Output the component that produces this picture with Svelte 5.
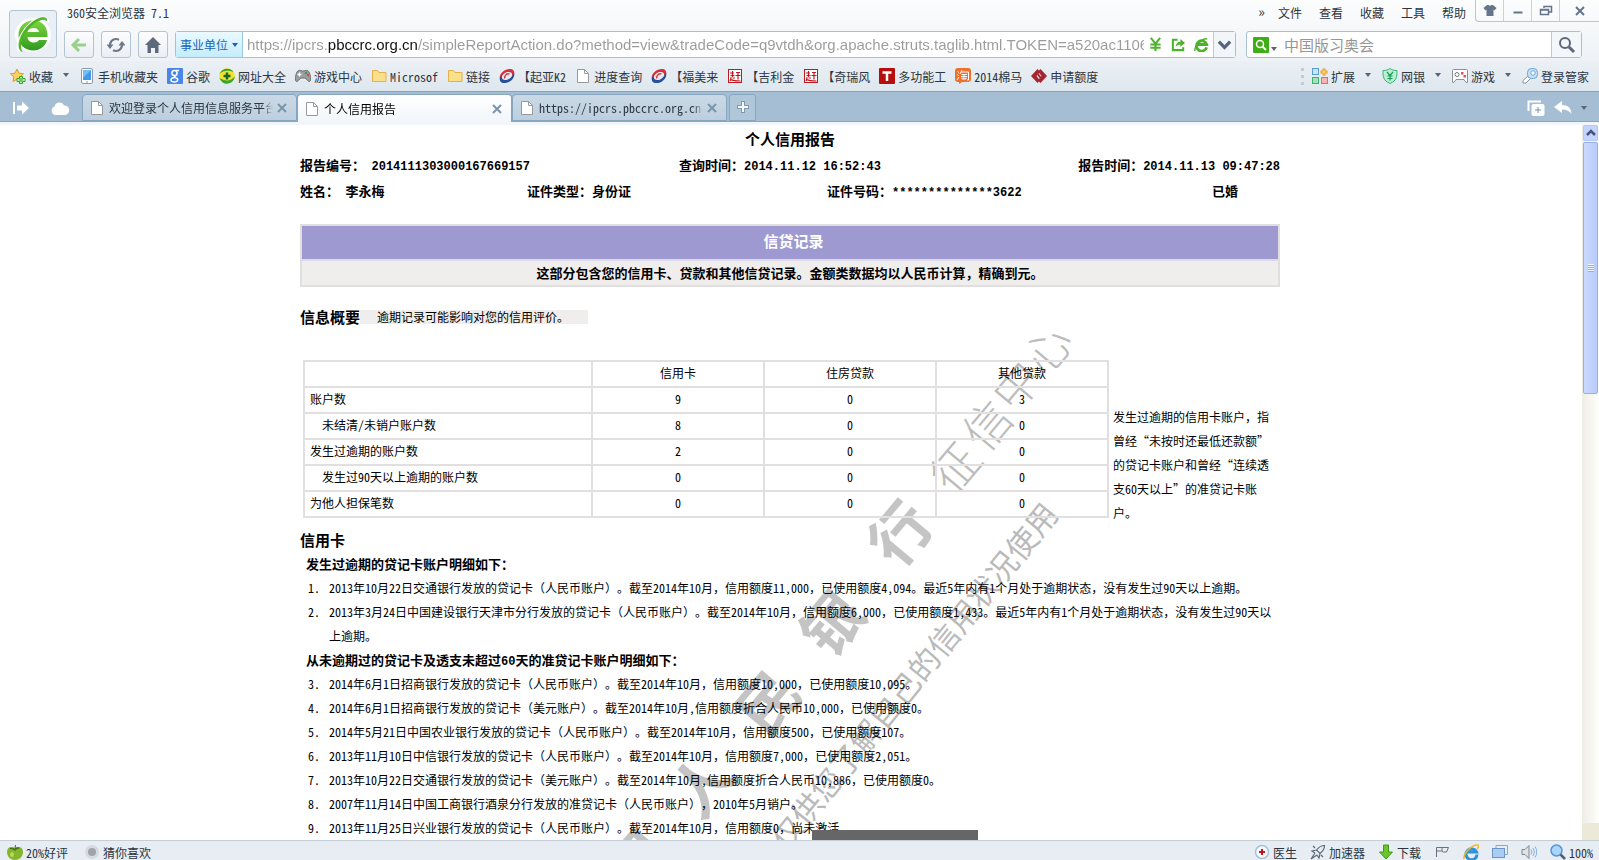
<script>
	let url =
		'https://ipcrs.pbccrc.org.cn/simpleReportAction.do?method=view&tradeCode=q9vtdh&org.apache.struts.taglib.html.TOKEN=a520ac1106ea';
	let keyword = '';

	const menus = ['文件', '查看', '收藏', '工具', '帮助'];

	const bookmarks = [
		{ icon: 'star', text: '收藏', arrow: true },
		{ icon: 'phone', text: '手机收藏夹' },
		{ icon: 'google', text: '谷歌' },
		{ icon: 'plus', text: '网址大全' },
		{ icon: 'pad', text: '游戏中心' },
		{ icon: 'folder', text: 'Microsof' },
		{ icon: 'folder', text: '链接' },
		{ icon: 'swirl', text: '【起亚K2' },
		{ icon: 'doc', text: '进度查询' },
		{ icon: 'swirl', text: '【福美来' },
		{ icon: 'gan', text: '【吉利金' },
		{ icon: 'gan', text: '【奇瑞风' },
		{ icon: 'tee', text: '多功能工' },
		{ icon: 'tao', text: '2014棉马' },
		{ icon: 'knot', text: '申请额度' }
	];

	const plugins = [
		{ icon: 'blocks', text: '扩展', arrow: true },
		{ icon: 'shield', text: '网银', arrow: true },
		{ icon: 'console', text: '游戏', arrow: true },
		{ icon: 'key', text: '登录管家' }
	];

	const tabs = [
		{ text: '欢迎登录个人信用信息服务平台', active: false },
		{ text: '个人信用报告', active: true },
		{ text: 'https://ipcrs.pbccrc.org.cn', active: false }
	];

	const summary = [
		{ name: '账户数', values: [9, 0, 3] },
		{ name: '未结清/未销户账户数', sub: true, values: [8, 0, 0] },
		{ name: '发生过逾期的账户数', values: [2, 0, 0] },
		{ name: '发生过90天以上逾期的账户数', sub: true, values: [0, 0, 0] },
		{ name: '为他人担保笔数', values: [0, 0, 0] }
	];

	const intro = '这部分包含您的信用卡、贷款和其他信贷记录。金额类数据均以人民币计算，精确到元。';

	const overdue = [
		'2013年10月22日交通银行发放的贷记卡（人民币账户）。截至2014年10月，信用额度11,000，已使用额度4,094。最近5年内有1个月处于逾期状态，没有发生过90天以上逾期。',
		'2013年3月24日中国建设银行天津市分行发放的贷记卡（人民币账户）。截至2014年10月，信用额度6,000，已使用额度1,433。最近5年内有1个月处于逾期状态，没有发生过90天以上逾期。'
	];

	const normal = [
		'2014年6月1日招商银行发放的贷记卡（人民币账户）。截至2014年10月，信用额度10,000，已使用额度10,095。',
		'2014年6月1日招商银行发放的贷记卡（美元账户）。截至2014年10月,信用额度折合人民币10,000，已使用额度0。',
		'2014年5月21日中国农业银行发放的贷记卡（人民币账户）。截至2014年10月，信用额度500，已使用额度107。',
		'2013年11月10日中信银行发放的贷记卡（人民币账户）。截至2014年10月，信用额度7,000，已使用额度2,051。',
		'2013年10月22日交通银行发放的贷记卡（美元账户）。截至2014年10月,信用额度折合人民币10,886，已使用额度0。',
		'2007年11月14日中国工商银行酒泉分行发放的准贷记卡（人民币账户），2010年5月销户。',
		'2013年11月25日兴业银行发放的贷记卡（人民币账户）。截至2014年10月，信用额度0，尚未激活。'
	];

	// odd entries are the full-width marks
	const parts = (text) => text.split(/([，（）]+)/);
</script>

{#snippet mixed(text)}
	{#each parts(text) as part, i}{#if i % 2}<span class="full">{part}</span>{:else}{part}{/if}{/each}
{/snippet}

{#snippet icon(name)}
	<svg class="icon" viewBox="0 0 16 16" aria-hidden="true">
		{#if name === 'star'}
			<path d="M7 1l2 4.200 4.500.6-3.300 3.100.8 4.600L7 11.300 3 13.500l.8-4.600L.5 5.800 5 5.200z" fill="#fbd35c" stroke="#dd9a2c" />
			<path d="M9.500 8.500h3v2h2.500v3h-2.500v2h-3v-2H7v-3h2.500z" fill="#fff" stroke="#2fa01d" />
			<path d="M11 9.500v5M8.500 12h5" stroke="#57c33c" stroke-width="1.500" />
		{:else if name === 'phone'}
			<rect x="2.500" y=".5" width="11" height="15" rx="1.500" fill="#fff" stroke="#8d99a8" />
			<rect x="4" y="2" width="8" height="10" fill="#3f9be8" />
			<path d="M4 2h8L4 10z" fill="#74bdf5" />
			<path d="M7 14h2" stroke="#8d99a8" />
		{:else if name === 'google'}
			<rect width="16" height="16" rx="1" fill="#4a86e8" />
			<circle cx="7.500" cy="5" r="2.600" fill="none" stroke="#fff" stroke-width="1.500" />
			<path d="M9 2.500h3M9 7.500c-2 1-2 2 0 2.500M7.500 9.500c-5 .5-4.500 4.500 0 4.500 4 0 4-3.500 1.500-4" fill="none" stroke="#fff" stroke-width="1.400" />
		{:else if name === 'plus'}
			<circle cx="8" cy="8" r="7.800" fill="#f7e233" />
			<path d="M.5 10A7.800 7.800 0 0 0 15.800 8c-3 5-9 6-15.300 2zM.5 6C3 0 11-1 14.500 4 9 2 5 2 .5 6z" fill="#3aa52c" />
			<path d="M8 4.500v7M4.500 8h7" stroke="#116b1a" stroke-width="2.500" />
		{:else if name === 'pad'}
			<path d="M2 4c2-3 4-1 6-1s4-2 6 1c1.500 3 2.500 9 .5 9.500C13 14 12 11 10 10H6c-2 1-3 4-4.500 3.500C-.5 13 .5 7 2 4z" fill="#9a9d9f" stroke="#6c7072" />
			<path d="M4.500 4.500v4M2.500 6.500h4" stroke="#fff" stroke-width="1.300" />
			<circle cx="11" cy="5" r="1.200" fill="#3a9a42" /><circle cx="13" cy="7" r="1.200" fill="#d04545" />
		{:else if name === 'folder'}
			<path d="M1.500 2.500h5l1.500 2h7v9h-13.500z" fill="#fbe08a" stroke="#e3b04a" />
		{:else if name === 'swirl'}
			<path d="M1 12C-1 6 6 0 12 1c4 1 4 5 1 8 1-4-1-5.500-4.500-5C5 4.500 2.500 8 1 12z" fill="#d8303a" />
			<path d="M15 4c2 6-5 12-11 11-4-1-4-5-1-8-1 4 1 5.500 4.500 5C11 11.500 13.500 8 15 4z" fill="#274f9b" />
			<path d="M6 10.500C4.500 8 8 5 10.500 6" fill="none" stroke="#d8303a" stroke-width="1.300" />
		{:else if name === 'doc'}
			<path d="M2.500 1.500h7l4 4v9h-11z" fill="#fff" stroke="#999" />
			<path d="M9.500 1.500v4h4" fill="none" stroke="#999" />
		{:else if name === 'gan'}
			<rect x="1.500" y="1.500" width="13" height="13" fill="#fff" stroke="#c01820" />
			<path d="M3 5h4M3.500 7.500h4M5.500 3v6M5.500 10H8M4 9c0 2 0 3-1 4M4 11.500c2 1.500 6 1.500 9.500 1.500M9 4.500h4M8.500 7.500h5M11 4.500v7" fill="none" stroke="#c01820" stroke-width="1.200" />
		{:else if name === 'tee'}
			<rect width="16" height="16" rx="1" fill="#b80d0d" />
			<path d="M3.500 4.500h9M8 4v9" stroke="#fff" stroke-width="2.500" />
		{:else if name === 'tao'}
			<path d="M3 0h10q3 0 3 3v8q0 3-3 3H7l-3 2v-2H3q-3 0-3-3V3q0-3 3-3z" fill="#f0702a" />
			<path d="M2.500 3.500l1.500 1M2 6.500l1.500 1M2 12l2-3M7 2L5 6M6 4h7.500v8H12M6.500 6.500H12M6 8.500h6M9 6v5M7 9.500V11h4V9.500" fill="none" stroke="#fff" />
		{:else if name === 'knot'}
			<path d="M6.500 1l2.500 2.500L5.500 8 9 12.500 6.500 15 0 8zM9.500 15L7 12.500 10.500 8 7 3.500 9.500 1 16 8z" fill="#a52630" />
			<path d="M6 5l4.500 6" stroke="#a52630" stroke-width="2" />
		{:else if name === 'blocks'}
			<rect x=".5" y=".5" width="6" height="6" fill="#c6e4fa" stroke="#5a9fd4" />
			<rect x=".5" y="9.500" width="6" height="6" fill="#a3e3ba" stroke="#3cb371" />
			<rect x="9.500" y="9.500" width="6" height="6" fill="#fbb4b4" stroke="#e26a6a" />
			<path d="M12 .5v7M8.500 4h7" stroke="#e89b20" stroke-width="3" />
			<path d="M12 1.500v5M9.500 4h5" stroke="#ffe08a" />
		{:else if name === 'shield'}
			<path d="M8 .5c2 1.500 4 2 7 2 0 6 0 10-7 13-7-3-7-7-7-13 3 0 5-.5 7-2z" fill="#b9f0d0" stroke="#36b37a" />
			<path d="M5 4l3 3.500L11 4M8 7v5.500M5.500 8h5M5.500 10.500h5" fill="none" stroke="#1d9c5b" stroke-width="1.200" />
		{:else if name === 'console'}
			<path d="M1.500 1.500h13q1 0 1 1v12q-1.500 1-3.500-3H4q-2 4-3.500 3v-12q0-1 1-1z" fill="#fff" stroke="#8f9199" />
			<circle cx="5" cy="6.500" r="2" fill="none" stroke="#777" />
			<rect x="9" y="4" width="2.500" height="2.500" fill="#e2564d" /><rect x="11.500" y="7" width="2.500" height="2.500" fill="#e2564d" />
		{:else if name === 'key'}
			<path d="M7 7l2.500 2.500L4 15H1v-2.500z" fill="#fff" stroke="#8a93a0" />
			<rect x="5.500" y=".5" width="10" height="10" rx="4" fill="#c3e0f7" stroke="#6fa6d6" />
			<circle cx="11" cy="5" r="2.200" fill="#fff" stroke="#6fa6d6" />
		{:else if name === 'apple'}
			<path d="M8 4c4-2 8-1 8 4s-4 8-8 8-8-3-8-8 4-6 8-4z" fill="#84b52a" />
			<path d="M8 5.500C6 4 4.500 4 3 4.500c2 0 4 .5 5 2 1-1.500 2-2 4-2.500-1.500-.5-3 0-4 .5L8.500 1" fill="#47701b" stroke="#47701b" />
			<ellipse cx="5" cy="10.500" rx="2" ry="2.500" fill="#b4d95b" />
		{:else if name === 'dot'}
			<circle cx="8" cy="8" r="7" fill="#d6dade" /><circle cx="8" cy="8" r="4" fill="#a0a4a8" />
		{:else if name === 'doctor'}
			<circle cx="8" cy="8" r="6.500" fill="#f4f8fb" stroke="#a8c3d8" stroke-width="1.500" />
			<path d="M8 5v6M5 8h6" stroke="#c5161d" stroke-width="2" />
		{:else if name === 'rocket'}
			<path d="M14.500 1.500c-4 0-6 2-8 4.500l3.500 3.500c2.500-2 4.500-4 4.500-8zM6.500 6L2 7l3 2M10 9.500L9 14l-2-3M5 9l-4 6 6-4M3 2l2 2M13 13l-2-2" fill="none" stroke="#5d6b7a" stroke-width="1.200" />
		{:else if name === 'down'}
			<path d="M5.500 1h5v7h4L8 15 1.500 8h4z" fill="#6cc52b" stroke="#3f9a17" />
		{:else if name === 'flag'}
			<path d="M2.500 13V3.500h12L12.500 8H9L7.500 7h-5M8 3.500V7" fill="none" stroke="#66717d" />
		{:else if name === 'ie'}
			<path d="M14 10.500A5.500 5.500 0 1 1 13.500 8H4" fill="none" stroke="#2b93dc" stroke-width="3" />
			<path d="M1 15C0 10 9 0 15 1c1 1 0 3-1 4" fill="none" stroke="#f1b92b" stroke-width="1.500" />
		{:else if name === 'window'}
			<path d="M4 5V1.500h11.500v9H13" fill="#e3eefa" stroke="#8fa6c4" />
			<rect x=".5" y="4.500" width="12" height="9" fill="#a9cdf2" stroke="#6c94c4" />
		{:else if name === 'speaker'}
			<path d="M1 5.500h3l4-4v13l-4-4H1z" fill="#dfe4e8" stroke="#7d8790" />
			<path d="M10 5.500q2 2.500 0 5M12 4q3 4 0 8M14 2.500q3.500 5.500 0 11" fill="none" stroke="#7fb2e0" />
		{:else if name === 'zoom'}
			<circle cx="6.500" cy="6.500" r="5.500" fill="#a9d5f8" stroke="#5a96cf" stroke-width="1.500" />
			<path d="M10.500 10.500l4.500 4.500" stroke="#54606c" stroke-width="2.500" />
		{/if}
	</svg>
{/snippet}

<div class="browser">
	<header>
		<button class="logo" aria-label="360安全浏览器">
			<svg viewBox="0 0 40 40">
				<defs>
					<linearGradient id="leaf" x1="0" y1="0" x2="0" y2="1">
						<stop offset="0" stop-color="#7ed63f" />
						<stop offset="1" stop-color="#2f9a1f" />
					</linearGradient>
				</defs>
				<ellipse cx="20" cy="21" rx="18" ry="17" fill="#fff" />
				<path d="M34.500 23H14.500c.5 4 3 5.500 6.500 5.500 2.500 0 4-1 5-2.500h8C32.500 32 27 36.500 20.500 36.500 11 36.500 5.500 30 5.500 21.500S11 6.500 20.500 6.500 35 13.500 34.500 23zM26 18c-.5-3-2.500-4-5.500-4S15.500 15 14.500 18z" fill="url(#leaf)" />
				<path d="M6 37C1 31 12 9 27 4.500c5-1.500 8 0 7.500 4" fill="none" stroke="#fff" stroke-width="2.500" />
				<path d="M10 38C0 36 8 12 25 4.500c6-2.500 10-1 9 3-1-2-4-2.500-8-.5C13 12 4 32 10 38z" fill="#4fb527" />
			</svg>
		</button>
		<div class="bars">
			<div class="titlebar">
				<span class="name">360安全浏览器 7.1</span>
				<nav class="menus">
					<span class="more">»</span>
					{#each menus as menu}
						<button>{menu}</button>
					{/each}
				</nav>
				<div class="controls">
					<button aria-label="皮肤">
						<svg viewBox="0 0 14 14"><path d="M4 1h1.500q1.500 1.500 3 0H10l3.500 3-2 2.500-1-1V12h-7V5.500l-1 1L.5 4z" fill="#64748a" /></svg>
					</button>
					<button aria-label="最小化">
						<svg viewBox="0 0 14 14"><path d="M2.500 8.500h9" stroke="#64748a" stroke-width="2" /></svg>
					</button>
					<button aria-label="还原">
						<svg viewBox="0 0 14 14"><path d="M5 4V2.500h7.500V8H10M1.500 5.500H9.500v5h-8zM1.500 6h8" fill="none" stroke="#64748a" stroke-width="1.500" /></svg>
					</button>
					<button class="quit" aria-label="关闭">
						<svg viewBox="0 0 14 14"><path d="M3 3l8 8M11 3l-8 8" stroke="#64748a" stroke-width="2" /></svg>
					</button>
				</div>
			</div>

			<div class="toolbar">
				<button class="tool" aria-label="后退">
					<svg viewBox="0 0 18 18"><path d="M16 9H4M9 3L3 9l6 6" fill="none" stroke="#98d08c" stroke-width="3" /></svg>
				</button>
				<button class="tool" aria-label="刷新">
					<svg viewBox="0 0 18 18">
						<path d="M3 10c-.5-4 2.500-7 6-7 1.500 0 2 .3 3 .8M15 8c.5 4-2.500 7-6 7-1.500 0-2-.3-3-.8" fill="none" stroke="#6a7888" stroke-width="2.200" />
						<path d="M-.5 8.500h7L3 13zM18.500 9.500h-7L15 5z" fill="#6a7888" />
					</svg>
				</button>
				<button class="tool" aria-label="主页">
					<svg viewBox="0 0 18 18"><path d="M9 1l8 8h-2.500v8H11v-5H7v5H3.500V9H1z" fill="#5c6a7c" /></svg>
				</button>
				<div class="address">
					<button class="site">事业单位<i class="caret"></i></button>
					<input type="text" aria-label="地址" bind:value={url} />
					<button class="mini" aria-label="购物">
						<svg viewBox="0 0 16 16"><path d="M3 1l5 6 5-6M8 7v8M2.500 8h11M2.500 11.500h11" fill="none" stroke="#4db22c" stroke-width="2.200" /></svg>
					</button>
					<button class="mini" aria-label="分享">
						<svg viewBox="0 0 16 16"><path d="M7 3H2v11h11v-3" fill="none" stroke="#4db22c" stroke-width="2.200" /><path d="M5 11c0-4 2-6 5-6V2l5 4.500-5 4V8c-2 0-4 1-5 3z" fill="#4db22c" /></svg>
					</button>
					<button class="mini" aria-label="兼容模式">
						<svg viewBox="0 0 16 16"><path d="M13.500 11A5.500 5.500 0 1 1 13.500 8H4" fill="none" stroke="#4db22c" stroke-width="3" /><path d="M1 15C0 10 9 1 14 2" fill="none" stroke="#4db22c" stroke-width="1.500" /></svg>
					</button>
					<button class="drop" aria-label="历史">
						<svg viewBox="0 0 16 16"><path d="M2 5l6 6 6-6" fill="none" stroke="#56657a" stroke-width="3.500" /></svg>
					</button>
				</div>
				<div class="search">
					<button class="engine" aria-label="搜索引擎">
						<svg viewBox="0 0 16 16"><rect width="16" height="16" rx="1" fill="#3fae16" /><circle cx="7" cy="7" r="3.500" fill="none" stroke="#fff" stroke-width="1.500" /><path d="M9.500 9.500L13 13" stroke="#fff" stroke-width="2" /></svg>
						<i class="caret"></i>
					</button>
					<input type="text" aria-label="搜索" placeholder="中国版习奥会" bind:value={keyword} />
					<button class="go" aria-label="开始搜索">
						<svg viewBox="0 0 18 18"><circle cx="7" cy="7" r="5" fill="none" stroke="#5c6878" stroke-width="2" /><path d="M11 11l5 5" stroke="#5c6878" stroke-width="3" /></svg>
					</button>
				</div>
			</div>
		</div>
	</header>

	<nav class="bookmarks">
		{#each bookmarks as item}
			<a href="#bookmark">{@render icon(item.icon)}{item.text}{#if item.arrow}<i class="caret"></i>{/if}</a>
		{/each}
		<div class="plugins">
			<span class="grip"></span>
			{#each plugins as item}
				<button>{@render icon(item.icon)}{item.text}{#if item.arrow}<i class="caret"></i>{/if}</button>
			{/each}
		</div>
	</nav>

	<div class="tabbar">
		<div class="side">
			<button aria-label="侧边栏">
				<svg viewBox="0 0 18 16" width="18" height="16"><path d="M1 2v12h2V2zM5 5.500h5V1.500L17 8l-7 6.500v-4H5z" fill="#fff" /></svg>
			</button>
			<button aria-label="云同步">
				<svg viewBox="0 0 20 16" width="20" height="16"><path d="M5 15a4.500 4.500 0 0 1-.5-8.500A5 5 0 0 1 14 5.500 4.700 4.700 0 0 1 15 15z" fill="#fff" /></svg>
			</button>
		</div>
		{#each tabs as tab}
			<div class="tab" class:active={tab.active}>
				{@render icon('doc')}
				<a href="#tab">{tab.text}</a>
				<button aria-label="关闭标签">
					<svg viewBox="0 0 10 10" width="10" height="10"><path d="M1 1l8 8M9 1L1 9" stroke="#7b94aa" stroke-width="2" /></svg>
				</button>
			</div>
		{/each}
		<button class="add" aria-label="新建标签">
			<svg viewBox="0 0 12 12" width="12" height="12"><path d="M6 0v12M0 6h12" stroke="#8298ac" stroke-width="4" /><path d="M6 1v10M1 6h10" stroke="#f3f8fc" stroke-width="2" /></svg>
		</button>
		<div class="tabtools">
			<button aria-label="恢复标签">
				<svg viewBox="0 0 18 16" width="18" height="16"><path d="M1.500 11V1.500H14" fill="none" stroke="#fff" stroke-width="2" /><rect x="4.500" y="4" width="13" height="12" rx="2" fill="#fff" /><path d="M11 7v6M8 10h6" stroke="#7892aa" /></svg>
			</button>
			<button aria-label="撤销">
				<svg viewBox="0 0 18 16" width="18" height="16"><path d="M0 7l8-6v4c6 0 9 3 9.500 9-2-3-5-4.500-9.500-4.500V13z" fill="#fff" /></svg>
			</button>
			<i class="caret"></i>
		</div>
	</div>

	<div class="view">
		<main>
			<article>
				<svg class="watermark" viewBox="0 0 980 715" aria-hidden="true">
					<g class="song" text-anchor="middle">
						<text transform="translate(655 342) rotate(-50)" dy="18">征</text>
						<text transform="translate(687 300) rotate(-50)" dy="18">信</text>
						<text transform="translate(716 260) rotate(-50)" dy="18">中</text>
						<text transform="translate(747 224) rotate(-50)" dy="18">心</text>
					</g>
					<g class="brush" text-anchor="middle">
						<text transform="translate(600 408) rotate(-50)" dy="23">行</text>
						<text transform="translate(532 498) rotate(-50)" dy="23">银</text>
						<text transform="translate(468 577) rotate(-50)" dy="23">民</text>
						<text transform="translate(402 659) rotate(-50)" dy="23">人</text>
						<text transform="translate(337 738) rotate(-50)" dy="23">国</text>
					</g>
					<text class="usage" transform="translate(487 727) rotate(-51)">仅供您了解自己的信用状况使用</text>
				</svg>

				<h1>个人信用报告</h1>
				<div class="info first">
					<span>报告编号： <b>2014111303000167669157</b></span>
					<span>查询时间：<b>2014.11.12 16:52:43</b></span>
					<span>报告时间：<b>2014.11.13 09:47:28</b></span>
				</div>
				<div class="info second">
					<span>姓名： 李永梅</span>
					<span>证件类型：身份证</span>
					<span>证件号码：<b>**************3622</b></span>
					<span>已婚</span>
				</div>

				<section class="banner">
					<h2>信贷记录</h2>
					<p>{@render mixed(intro)}</p>
				</section>

				<div class="overview">
					<h2>信息概要</h2>
					<p>逾期记录可能影响对您的信用评价。</p>
				</div>

				<div class="summary">
					<table>
						<thead>
							<tr>
								<td></td>
								<th scope="col">信用卡</th>
								<th scope="col">住房贷款</th>
								<th scope="col">其他贷款</th>
							</tr>
						</thead>
						<tbody>
							{#each summary as row}
								<tr>
									<th scope="row" class:sub={row.sub}>{row.name}</th>
									{#each row.values as value}
										<td>{value}</td>
									{/each}
								</tr>
							{/each}
						</tbody>
					</table>
					<p>发生过逾期的信用卡账户<span class="full">，</span>指曾经“未按时还最低还款额”<wbr />的贷记卡账户和曾经“连续透支60天以上”<wbr />的准贷记卡账户。</p>
				</div>

				<h2>信用卡</h2>
				<h3>发生过逾期的贷记卡账户明细如下：</h3>
				<ol>
					{#each overdue as line}
						<li>{@render mixed(line)}</li>
					{/each}
				</ol>
				<h3>从未逾期过的贷记卡及透支未超过<b>60</b>天的准贷记卡账户明细如下：</h3>
				<ol class="rest">
					{#each normal as line}
						<li>{@render mixed(line)}</li>
					{/each}
				</ol>
				<div class="floater"></div>
			</article>
		</main>
		<div class="scrollbar">
			<button aria-label="向上滚动">
				<svg viewBox="0 0 10 8" width="10" height="8"><path d="M1 6l4-4 4 4" fill="none" stroke="#42557d" stroke-width="2.500" /></svg>
			</button>
			<div class="thumb"><span></span></div>
			<div class="corner"></div>
		</div>
	</div>

	<footer>
		<button>{@render icon('apple')}20%好评</button>
		<button>{@render icon('dot')}猜你喜欢</button>
		<div class="status">
			<button>{@render icon('doctor')}医生</button>
			<button>{@render icon('rocket')}加速器</button>
			<button>{@render icon('down')}下载</button>
			<button aria-label="举报">{@render icon('flag')}</button>
			<button aria-label="浏览器模式">{@render icon('ie')}</button>
			<button aria-label="窗口">{@render icon('window')}</button>
			<button aria-label="静音">{@render icon('speaker')}</button>
			<button>{@render icon('zoom')}100%</button>
		</div>
	</footer>
</div>

<style>
	:global(body) {
		margin: 0;
		background: #fff;
	}

	.browser {
		display: flex;
		flex-direction: column;
		height: 100vh;
		overflow: hidden;
		font-family: 'Noto Sans CJK SC', sans-serif;
		font-size: 12px;
		font-feature-settings: 'hwid' 1;
		text-spacing-trim: space-all;
		color: #2c3540;
	}

	button,
	input {
		margin: 0;
		padding: 0;
		border: 0;
		background: none;
		font: inherit;
		font-feature-settings: inherit;
		color: inherit;
	}

	a {
		color: inherit;
		text-decoration: none;
	}

	h1,
	h2,
	h3,
	p,
	ol {
		margin: 0;
		padding: 0;
		font-size: inherit;
	}

	.full {
		font-feature-settings: normal;
	}

	.icon {
		flex: none;
		width: 16px;
		height: 16px;
	}

	.caret {
		border: 3px solid transparent;
		border-top: 4px solid #5a6470;
		border-bottom: 0;
	}

	header {
		display: flex;
		height: 61px;
		padding-left: 9px;
		background: linear-gradient(#fcfdfd, #eef2f6);
	}

	.logo {
		flex: none;
		width: 48px;
		height: 48px;
		margin: 10px 7px 0 0;
		border: 1px solid #b3c4d4;
		border-radius: 3px;
		background: #e9eff4;
	}

	.logo svg {
		display: block;
		width: 40px;
		height: 40px;
		margin: auto;
	}

	.bars {
		flex: 1;
		min-width: 0;
	}

	.titlebar {
		display: flex;
		height: 31px;
	}

	.name {
		padding-left: 3px;
		line-height: 25px;
	}

	.menus {
		display: flex;
		gap: 17px;
		height: 25px;
		margin-left: auto;
		align-items: center;
	}

	.more {
		font-size: 14px;
		margin-right: -4px;
		padding-bottom: 3px;
	}

	.controls {
		display: flex;
		height: 21px;
		margin-left: 9px;
		border: 1px solid #b7c8d8;
		border-width: 0 0 1px 1px;
		border-radius: 0 0 0 4px;
	}

	.controls button {
		width: 28px;
		padding-top: 4px;
		border-right: 1px solid #c5d3df;
	}

	.controls .quit {
		width: 39px;
		border-right: 0;
	}

	.controls svg {
		width: 14px;
		height: 14px;
	}

	.toolbar {
		display: flex;
		gap: 7px;
		height: 27px;
		padding-right: 17px;
	}

	.tool {
		flex: none;
		width: 30px;
		border: 1px solid #b3c4d4;
		border-radius: 3px;
		background: linear-gradient(#fdfdfe, #eaeff4);
	}

	.tool svg {
		display: block;
		width: 18px;
		height: 18px;
		margin: auto;
	}

	.address,
	.search {
		display: flex;
		align-items: stretch;
		box-sizing: border-box;
		border: 1px solid #a9c0d3;
		border-radius: 3px;
		background: #fff;
	}

	.address {
		flex: 1;
		min-width: 0;
	}

	.site {
		display: flex;
		flex: none;
		align-items: center;
		justify-content: center;
		gap: 4px;
		width: 67px;
		border-right: 1px solid #9cc7e4;
		background: linear-gradient(#eafaff, #c4ecfb);
		color: #1b64b5;
	}

	.site .caret {
		border-top-color: #1b64b5;
	}

	.address input {
		flex: 1;
		min-width: 0;
		padding-left: 4px;
		font-family: 'Liberation Sans', sans-serif;
		font-size: 15px;
		color: transparent;
		background: linear-gradient(90deg, #9b9b9b 85px, #111 85px, #111 175px, #9b9b9b 175px);
		background-clip: text;
		-webkit-background-clip: text;
	}

	.mini {
		display: grid;
		flex: none;
		width: 23px;
		place-items: center;
	}

	.mini svg,
	.drop svg {
		display: block;
		width: 15px;
		height: 15px;
		margin: auto;
	}

	.drop {
		flex: none;
		width: 22px;
		border-left: 1px solid #b9cad8;
		background: #f2f6f9;
	}

	.search {
		flex: none;
		width: 336px;
		margin-left: 3px;
	}

	.engine {
		display: flex;
		align-items: center;
		gap: 2px;
		padding-left: 6px;
	}

	.engine svg {
		width: 16px;
		height: 16px;
	}

	.engine .caret {
		align-self: flex-end;
		margin-bottom: 6px;
	}

	.search input {
		flex: 1;
		min-width: 0;
		padding-left: 7px;
		font-size: 15px;
	}

	.search input::placeholder {
		color: #969696;
	}

	.go {
		width: 30px;
		border-left: 1px solid #b9cad8;
		background: #f4f7fa;
	}

	.go svg {
		display: block;
		width: 18px;
		height: 18px;
		margin: auto;
	}

	.bookmarks {
		display: flex;
		gap: 9px;
		height: 30px;
		padding: 0 10px;
		align-items: center;
		background: linear-gradient(#ebf0f4, #dee7ef);
		white-space: nowrap;
	}

	.bookmarks a,
	.bookmarks button {
		display: flex;
		gap: 3px;
		align-items: center;
	}

	.bookmarks .caret {
		margin: 0 1px 2px 7px;
	}

	.plugins {
		display: flex;
		gap: 10px;
		margin-left: auto;
	}

	.grip {
		width: 2px;
		margin-right: -4px;
		border-left: 3px dotted #c3ccd4;
	}

	.tabbar {
		display: flex;
		flex: none;
		box-sizing: border-box;
		height: 34px;
		padding-top: 2px;
		border-top: 1px solid #86a3bb;
		border-bottom: 3px solid #f2f6fa;
		background: #a5bed4;
		box-shadow: inset 0 -1px #84a7c2;
	}

	.side {
		display: flex;
		flex: none;
		gap: 20px;
		box-sizing: border-box;
		width: 82px;
		padding-left: 12px;
		align-items: center;
	}

	.side button,
	.tabtools button {
		display: flex;
	}

	.tab {
		display: flex;
		gap: 4px;
		align-items: center;
		box-sizing: border-box;
		flex: 0 1 215px;
		min-width: 0;
		height: 27px;
		padding: 0 9px 0 6px;
		border: 1px solid #86a6c0;
		border-radius: 4px 4px 0 0;
		background: linear-gradient(#cbd9e6, #bccfdf);
	}

	.tab.active {
		height: 28px;
		border-bottom: 0;
		background: linear-gradient(#fff, #f2f6fa);
		color: #000;
	}

	.tab a {
		flex: 1;
		overflow: hidden;
		white-space: nowrap;
		mask-image: linear-gradient(90deg, #000 94%, transparent);
	}

	.tab button {
		display: flex;
	}

	.add {
		width: 27px;
		height: 27px;
		margin-left: 2px;
		border: 1px solid #86a6c0;
		border-radius: 3px 3px 0 0;
		background: #b0c7da;
	}

	.tabtools {
		display: flex;
		gap: 9px;
		margin-left: auto;
		padding-right: 12px;
		align-items: center;
	}

	.view {
		display: flex;
		flex: 1;
		min-height: 0;
	}

	main {
		flex: 1;
		overflow: hidden;
		border-right: 2px solid #fff;
		background: #fff;
		color: #000;
	}

	article {
		position: relative;
		width: 980px;
		margin: 0 auto;
		padding-top: 1px;
		line-height: 24px;
	}

	.watermark {
		position: absolute;
		z-index: 0;
		top: 0;
		left: 0;
		width: 980px;
		height: 715px;
	}

	.song {
		font-size: 47px;
		font-weight: 300;
		fill: #bcbcbc;
	}

	.brush {
		font-size: 60px;
		font-weight: 700;
		fill: #c4c4c4;
	}

	.usage {
		font-size: 31px;
		font-weight: 400;
		fill: #bababa;
	}

	h1,
	.info,
	.banner,
	.overview,
	.summary,
	h3,
	ol {
		position: relative;
	}

	h1 {
		font-size: 15px;
		line-height: 26px;
		text-align: center;
	}

	.info {
		display: grid;
		font-size: 13px;
		font-weight: bold;
		line-height: 26px;
		white-space: nowrap;
	}

	.info b,
	h3 b {
		font-family: 'Liberation Mono', monospace;
		font-size: 12px;
		line-height: 1;
	}

	.first {
		grid-template-columns: 379px 1fr auto;
	}

	.second {
		grid-template-columns: 227px 300px 385px 1fr;
	}

	.banner {
		margin-top: 20px;
		border: 2px solid #e0dede;
		text-align: center;
	}

	.banner h2 {
		padding: 0 0 4px 7px;
		border-bottom: 2px solid #dcd9e8;
		background: #9e9ad1;
		color: #fff;
		line-height: 29px;
	}

	.banner p {
		background: #f0eded;
		font-size: 13px;
		font-weight: bold;
	}

	h2 {
		font-size: 15px;
	}

	.overview {
		display: flex;
		margin: 18px 0 31px;
		align-items: center;
	}

	.overview p {
		width: 211px;
		padding-left: 17px;
		background: #f0eded;
		line-height: 14px;
	}

	.summary {
		display: flex;
		gap: 4px;
		margin: 0 0 3px 3px;
		align-items: flex-start;
	}

	.summary p {
		flex: 1;
		padding-top: 45px;
	}

	table {
		width: 806px;
		border-collapse: collapse;
		table-layout: fixed;
		flex: none;
	}

	th,
	td {
		height: 22px;
		padding: 0 0 2px;
		border: 2px solid #e2dfe0;
		font-weight: normal;
		line-height: 22px;
		text-align: center;
	}

	tr > :first-child {
		width: 286px;
	}

	th[scope='row'] {
		padding-left: 5px;
		text-align: left;
	}

	th.sub {
		padding-left: 17px;
	}

	h3 {
		padding-left: 6px;
		font-size: 13px;
	}

	ol {
		padding-left: 29px;
		list-style: none;
		counter-reset: item;
	}

	.rest {
		counter-reset: item 2;
	}

	li {
		counter-increment: item;
	}

	li::before {
		content: counter(item) '.';
		float: left;
		width: 21px;
		margin-left: -21px;
	}

	.floater {
		position: absolute;
		top: 705px;
		left: 512px;
		width: 166px;
		height: 40px;
		background: #666;
	}

	.scrollbar {
		display: flex;
		flex-direction: column;
		width: 17px;
		background: linear-gradient(90deg, #eeede5, #fefefb);
	}

	.scrollbar button {
		display: grid;
		height: 16px;
		margin: 0 1px 1px;
		border: 1px solid #b4c8f2;
		border-radius: 2px;
		background: #c3d3fd;
		place-items: center;
	}

	.thumb {
		display: grid;
		flex: 0 1 35%;
		margin: 0 1px;
		border: 1px solid #98b0e0;
		border-radius: 2px;
		background: linear-gradient(90deg, #cbdafe, #b9cbfa);
		place-items: center;
	}

	.thumb span {
		width: 6px;
		height: 8px;
		background: repeating-linear-gradient(#eef4fe 0 1px, #8cb0f8 1px 2px);
	}

	.corner {
		height: 17px;
		margin-top: auto;
		background: #ece9d8;
	}

	footer {
		display: flex;
		flex: none;
		gap: 16px;
		box-sizing: border-box;
		height: 20px;
		padding: 3px 6px 0 7px;
		align-items: center;
		border-top: 1px solid #c3ced6;
		background: #e8edf4;
	}

	footer button {
		display: flex;
		gap: 3px;
		align-items: center;
		white-space: nowrap;
	}

	.status {
		display: flex;
		gap: 13px;
		margin-left: auto;
	}
</style>
